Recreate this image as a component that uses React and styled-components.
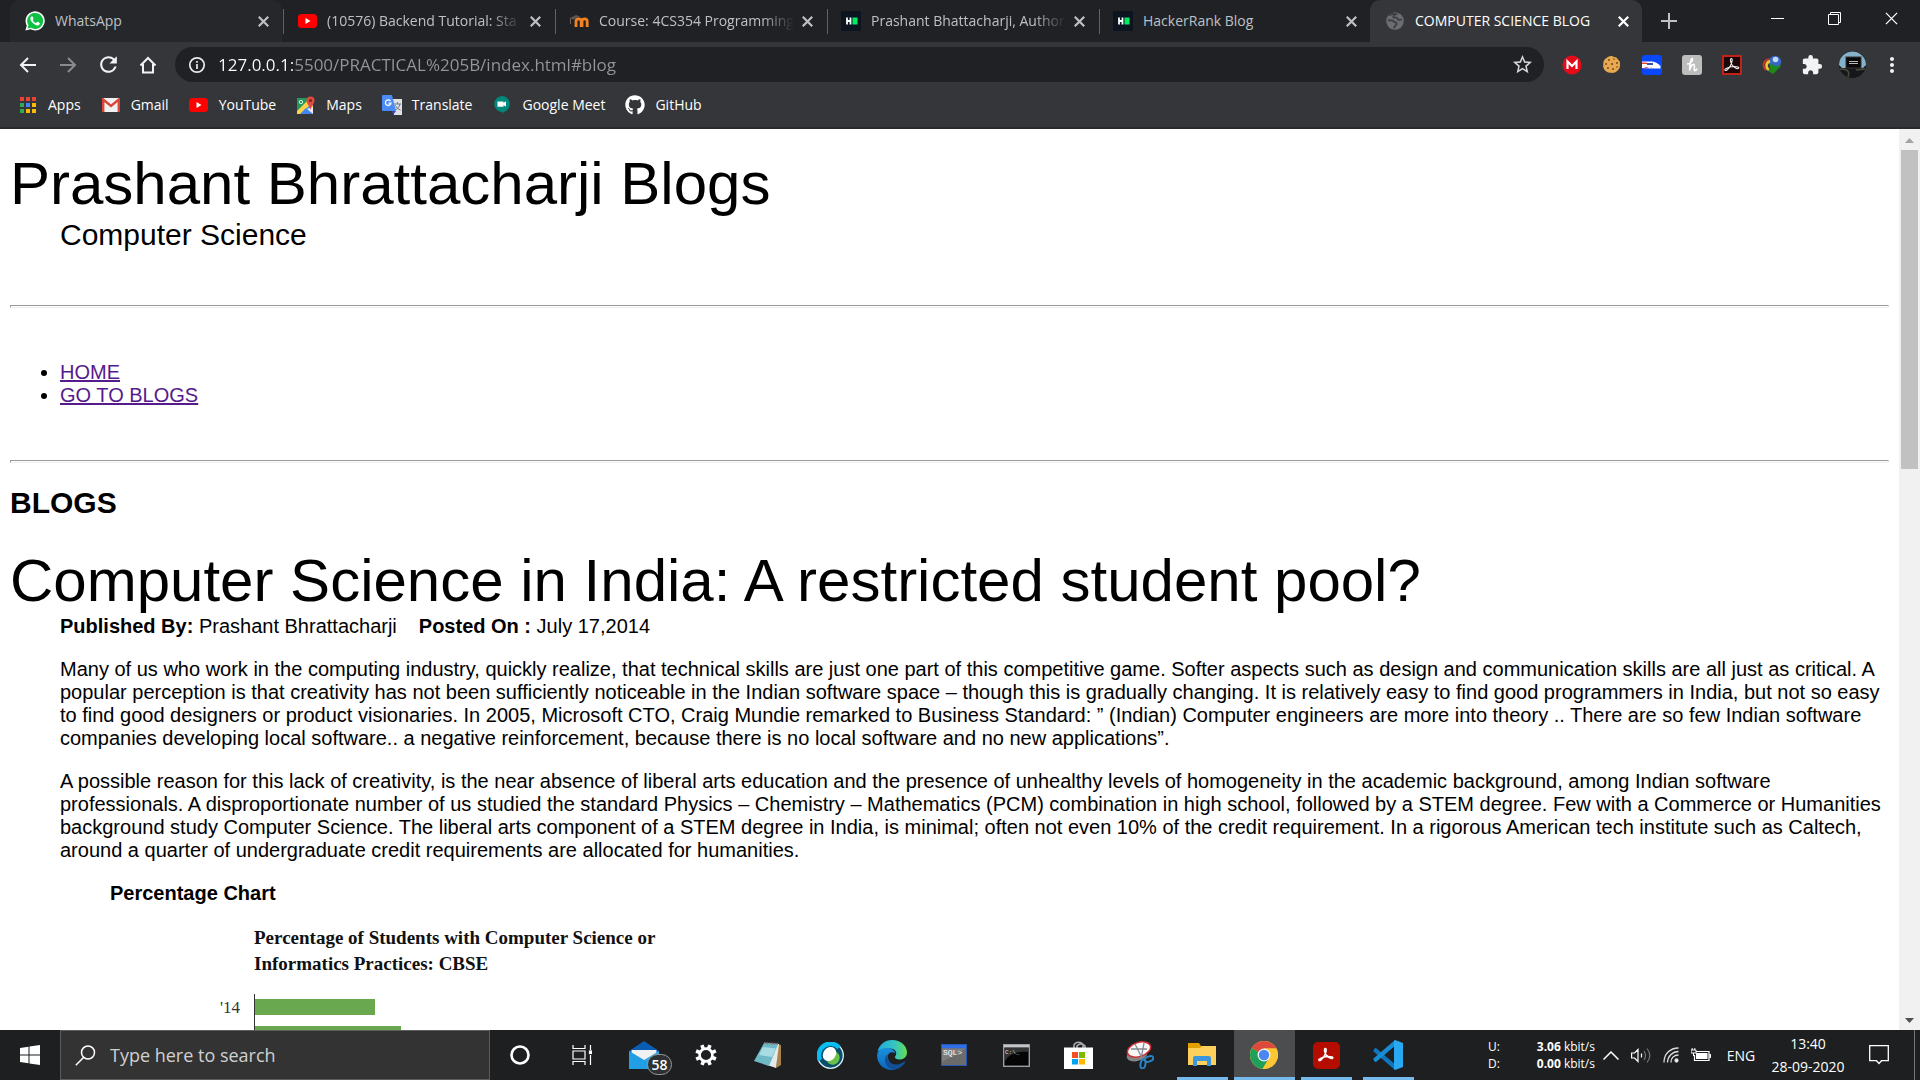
import React from "react";
import styled, { createGlobalStyle, css } from "styled-components";
import { FaGithub } from "react-icons/fa";
import { MdExtension, MdStarBorder, MdMoreVert, MdRefresh } from "react-icons/md";

const UI_FONT = `"Open Sans", "Noto Sans", sans-serif`;
const PAGE_FONT = `"Liberation Sans", Arial, sans-serif`;
const CHART_FONT = `"Liberation Serif", "Times New Roman", serif`;

const GlobalStyle = createGlobalStyle`
  *, *::before, *::after { box-sizing: border-box; }
  html, body { margin: 0; padding: 0; }
  body { background: #fff; font-family: ${UI_FONT}; overflow: hidden; }
  button { font: inherit; color: inherit; background: none; border: 0; padding: 0; }
  svg { display: block; flex: none; }
`;

const Screen = styled.div`
  display: flex;
  flex-direction: column;
  height: 100vh;
`;

/* ---------- browser frame ---------- */

const TabStrip = styled.div`
  display: flex;
  height: 42px;
  padding-left: 10px;
  background: #202124;
  color: #bdc1c6;
`;

const Tab = styled.div`
  display: flex;
  align-items: center;
  flex: 0 1 272px;
  min-width: 0;
  height: 42px;
  padding: 0 10px 0 15px;
  gap: 10px;
  font-size: 14px;
  position: relative;
  ${(p) => p.$hover && css`
    background: #26272b;
    border-radius: 10px 10px 0 0;
  `}
  ${(p) => p.$divider && css`
    &::after {
      content: "";
      position: absolute;
      right: -2px;
      top: 9px;
      width: 1px;
      height: 25px;
      background: #5f6368;
    }
  `}
  ${(p) => p.$active && css`
    background: #35363a;
    color: #fff;
    border-radius: 10px 10px 0 0;
  `}
`;

const IconSlot = styled.span`
  display: flex;
  align-items: center;
  justify-content: center;
  flex: none;
  width: 20px;
  height: 20px;
`;

const TabTitle = styled.span`
  flex: 1;
  min-width: 0;
  overflow: hidden;
  white-space: nowrap;
  line-height: 22px;
  ${(p) => p.$fade && css`
    mask-image: linear-gradient(to right, #000 calc(100% - 32px), transparent);
  `}
`;

const TabClose = styled.button`
  display: flex;
  align-items: center;
  justify-content: center;
  width: 18px;
  height: 18px;
  margin-left: -6px;
`;

const NewTab = styled.button`
  display: flex;
  align-items: center;
  justify-content: center;
  width: 54px;
`;

const WindowControls = styled.div`
  display: flex;
  margin-left: auto;
  height: 36px;
`;

const WindowButton = styled.button`
  display: flex;
  align-items: center;
  justify-content: center;
  width: 57px;
  color: #fff;
`;

const Toolbar = styled.div`
  display: flex;
  align-items: center;
  height: 45px;
  padding: 0 8px;
  background: #35363a;
  color: #f1f3f4;
`;

const ToolButton = styled.button`
  display: flex;
  align-items: center;
  justify-content: center;
  width: 40px;
  height: 36px;
  opacity: ${(p) => (p.$dim ? 0.45 : 1)};
`;

const Omnibox = styled.form`
  display: flex;
  align-items: center;
  flex: 1;
  height: 35px;
  margin: 0 8px 0 7px;
  padding: 0 10px 0 13px;
  gap: 12px;
  border-radius: 18px;
  background: #202124;
`;

const Address = styled.input`
  flex: 1;
  min-width: 0;
  height: 28px;
  padding: 0;
  border: 0;
  outline: 0;
  font: 17px/28px ${UI_FONT};
  color: #9a9a9a;
  background: linear-gradient(to right, #fff 75px, #949699 75px);
  background-clip: text;
  -webkit-text-fill-color: transparent;
`;

const Bookmarks = styled.nav`
  display: flex;
  align-items: center;
  height: 42px;
  padding: 0 0 4px 18px;
  gap: 20px;
  background: #35363a;
  border-bottom: 2px solid #28292c;
`;

const Bookmark = styled.a`
  display: flex;
  align-items: center;
  gap: 10px;
  color: #fff;
  font-size: 14px;
  line-height: 20px;
  text-decoration: none;
`;

/* ---------- web page ---------- */

const Viewport = styled.div`
  display: flex;
  flex: 1;
  min-height: 0;
  background: #fff;
`;

const Page = styled.main`
  flex: 1;
  min-width: 0;
  overflow: hidden;
  padding: 21px 10px 0;
  color: #000;
  font: 20px/23px ${PAGE_FONT};
`;

const Headline = styled.h1`
  margin: 0;
  font-size: 60px;
  font-weight: 400;
  line-height: 68px;
`;

const Indent = styled.div`
  padding-left: 50px;
`;

const Tagline = styled.div`
  font-size: 30px;
  line-height: 34px;
`;

const Rule = styled.hr`
  height: 3px;
  margin: 53px 0;
  border: 1px solid #9a9a9a;
  border-color: #9a9a9a #eee #eee #9a9a9a;
`;

const LinkList = styled.ul`
  margin: 0;
  padding-left: 50px;
`;

const VisitedLink = styled.a`
  color: #551a8b;
  text-decoration-thickness: 2px;
`;

const SectionTitle = styled.h2`
  margin: -30px 0 27px;
  font-size: 30px;
  line-height: 34px;
`;

const Byline = styled.div`
  display: flex;
  gap: 22px;
`;

const Paragraph = styled.p`
  margin: 20px 0 0;
`;

const ChartBlock = styled.section`
  padding-left: 50px;
`;

const ChartHeading = styled.h3`
  margin: 20px 0;
  font-size: 20px;
  line-height: 23px;
`;

const Figure = styled.figure`
  margin: 0;
  padding-left: 110px;
`;

const ChartTitle = styled.figcaption`
  width: 440px;
  margin: 0 0 17px 34px;
  font: bold 19px/26px ${CHART_FONT};
  color: #111;
`;

const ChartRow = styled.div`
  display: flex;
  align-items: center;
  height: 27px;
`;

const ChartLabel = styled.span`
  width: 34px;
  padding-right: 15px;
  text-align: right;
  font: 17px/20px ${CHART_FONT};
  color: #333;
`;

const ChartTrack = styled.div`
  display: flex;
  align-items: center;
  height: 27px;
  border-left: 1px solid #333;
`;

const ChartBar = styled.div`
  height: 16px;
  background: #6aa84f;
  margin-bottom: 2px;
`;

const ScrollTrack = styled.div`
  display: flex;
  flex-direction: column;
  align-items: center;
  width: 21px;
  padding: 9px 2px 7px;
  background: #f1f1f1;
`;

const ScrollThumb = styled.div`
  width: 17px;
  height: 36%;
  margin: 7px 0 auto;
  background: #c1c1c1;
`;

/* ---------- taskbar ---------- */

const Taskbar = styled.footer`
  display: flex;
  height: 50px;
  background: #1d1f20;
  color: #fff;
`;

const StartButton = styled.button`
  display: flex;
  align-items: center;
  justify-content: center;
  width: 60px;
`;

const SearchBox = styled.label`
  display: flex;
  align-items: center;
  width: 430px;
  padding: 0 14px;
  gap: 14px;
  background: #333;
  border: 1px solid #5c5c5c;
`;

const SearchInput = styled.input`
  flex: 1;
  min-width: 0;
  padding: 0;
  border: 0;
  outline: 0;
  background: none;
  color: #fff;
  font: 18px/26px ${UI_FONT};
  &::placeholder { color: #d0d0d0; opacity: 1; }
`;

const AppList = styled.div`
  display: flex;
  gap: 1px;
`;

const AppButton = styled.button`
  display: flex;
  align-items: center;
  justify-content: center;
  width: 61px;
  padding-right: 1px;
  position: relative;
  background: ${(p) => (p.$focused ? "#4b4d4e" : "transparent")};
  ${(p) => p.$open && css`
    &::after {
      content: "";
      position: absolute;
      bottom: 0;
      left: ${p.$focused ? 0 : 5}px;
      right: ${p.$focused ? 0 : 5}px;
      height: 3px;
      background: #76b9ed;
    }
  `}
`;

const Badge = styled.span`
  position: absolute;
  right: 3px;
  bottom: 5px;
  width: 25px;
  height: 21px;
  border: 1px solid #999;
  border-radius: 11px;
  background: #2d3133;
  font-size: 14px;
  font-weight: 600;
  line-height: 19px;
  text-align: center;
`;

const Tray = styled.div`
  display: flex;
  align-items: center;
  margin-left: auto;
  height: 50px;
`;

const NetMeter = styled.div`
  display: grid;
  grid-template-columns: 47px 60px;
  line-height: 17px;
  font-size: 12px;
  margin-right: 1px;
`;

const NetValue = styled.span`
  text-align: right;
  white-space: nowrap;
`;

const TrayButton = styled.button`
  display: flex;
  align-items: center;
  justify-content: center;
  width: 30px;
  height: 50px;
`;

const Language = styled.button`
  width: 50px;
  font-size: 14px;
`;

const Clock = styled.time`
  width: 84px;
  text-align: center;
  font-size: 14px;
  line-height: 23px;
`;

const Notifications = styled.button`
  display: flex;
  justify-content: center;
  width: 64px;
  padding-right: 6px;
`;

const ShowDesktop = styled.button`
  width: 6px;
  height: 50px;
  border-left: 1px solid #777;
`;

/* ---------- icons ---------- */

const Svg = ({ w = 20, h = w, box, children, ...rest }) => (
  <svg width={w} height={h} viewBox={box || `0 0 ${w} ${h}`} fill="none" aria-hidden="true" {...rest}>
    {children}
  </svg>
);

const Cross = ({ size = 10, width = 2 }) => (
  <Svg w={size} box="0 0 10 10" stroke="currentColor" strokeWidth={width}>
    <path d="M.7.7 9.3 9.3M9.3.7.7 9.3" />
  </Svg>
);

const WhatsAppIcon = () => (
  <Svg w={20} box="0 0 20 20">
    <path d="M.4 19.6 1.8 14.6A9.6 9.6 0 1 1 5.6 18.3Z" fill="#fff" />
    <path d="M2.5 17.6 3.4 14.2A8 8 0 1 1 6.1 16.8Z" fill="#0dc143" />
    <path d="M7 5.2c-.6 0-1.7.9-1.7 2.4 0 2.6 4 6.7 7 6.9 1.300 0 2.500-.9 2.500-2.300 0-.4-2-1.500-2.400-1.400-.4 0-1 1.200-1.400 1.200-1 0-3.300-2.300-3.300-3 0-.3.800-.9.800-1.300C8.500 7.200 7.700 5.200 7 5.200Z" fill="#fff" />
  </Svg>
);

const YouTubeIcon = () => (
  <Svg w={19} h={14}>
    <rect width="19" height="14" rx="3.500" fill="#f00" />
    <path d="M7.500 4 12.500 7l-5 3Z" fill="#fff" />
  </Svg>
);

const MoodleIcon = () => (
  <Svg w={20} h={20}>
    <path d="M7 16V10.500a2.600 2.600 0 0 1 5.200 0V16M13 16V10.500a2.600 2.600 0 0 1 5.200 0V16" stroke="#f58220" strokeWidth="2.800" />
    <path d="M0 7.500 7 4l4 1.500L5 8.500Z" fill="#5b5550" />
    <path d="M1.500 7.500V13" stroke="#6b625b" strokeWidth="1" />
  </Svg>
);

const HackerRankIcon = () => (
  <Svg w={20}>
    <rect width="20" height="20" fill="#0b141f" />
    <path d="M6 6.500v7M9.500 6.500v7M6 10h3.500" stroke="#fff" strokeWidth="1.800" />
    <rect x="11.500" y="6.500" width="5" height="7" fill="#00ea64" />
  </Svg>
);

const GlobeIcon = () => (
  <Svg w={18}>
    <circle cx="9" cy="9" r="8.800" fill="#6a6d72" />
    <path d="M3 3.500C5 2 8 1.500 10 2.200 8 3 7 4 7.500 5.500c2.500-.5 4 .5 4.500 2 1.500.3 3 .5 4 0M2 8.500c2.500-.5 5 0 6.500 1.500 2 .3 2.500 1.500 1.500 3-1.300.7-1.500 1.800-2 3.200" stroke="#3d3f43" strokeWidth="1.900" />
  </Svg>
);

const ArrowIcon = ({ flip }) => (
  <Svg w={18} box="0 0 18 18" stroke="currentColor" strokeWidth="2">
    {flip ? <path d="M1 9h15M9 2l7 7-7 7" /> : <path d="M17 9H2M9 2 2 9l7 7" />}
  </Svg>
);

const HomeIcon = () => (
  <Svg w={18} stroke="currentColor" strokeWidth="2">
    <path d="M1.500 9.500 9 2l7.500 7.500M4 8v8.500h10V8" />
  </Svg>
);

const InfoIcon = () => (
  <Svg w={18} stroke="#e8eaed" strokeWidth="1.700">
    <circle cx="9" cy="9" r="7.200" />
    <path d="M9 8v5M9 5v1.800" />
  </Svg>
);

const MegaIcon = () => (
  <Svg w={20}>
    <circle cx="10" cy="10" r="9.500" fill="#e60b18" />
    <path d="M5.500 14V6.500L10 11l4.500-4.500V14" stroke="#fff" strokeWidth="2.200" />
  </Svg>
);

const CookieIcon = () => (
  <Svg w={20}>
    <path d="M6 2c3-2 5-.5 6.500 0 3 .5 3 2.500 4.500 3.500 1.500 2 1 3 1 5 0 3-1.500 4-3 5.500-2 2-4 2-6 1.800C5 18 3.500 16 2 14c-1.200-2-.8-3.500-.7-5.500C1.300 5 3.500 3.500 6 2Z" fill="#e8a850" />
    <g fill="#6b421c">
      <circle cx="7" cy="5" r=".9" /><circle cx="12" cy="4" r=".8" /><circle cx="4" cy="9" r=".9" />
      <circle cx="10" cy="9" r="1" /><circle cx="15" cy="8" r=".9" /><circle cx="6" cy="13" r=".9" />
      <circle cx="11" cy="14" r=".9" /><circle cx="15" cy="12" r=".8" />
    </g>
  </Svg>
);

const TrainIcon = () => (
  <Svg w={20}>
    <rect width="20" height="20" rx="3" fill="#0a48fb" />
    <path d="M0 6.500h9c4 0 7 2 9.500 4.500v2.500H8L0 13Z" fill="#fff" />
    <path d="M0 7.500h5v1.500H0ZM0 14c4-3 8-2.500 12-.2L7 12.300Z" fill="#e5483c" />
    <path d="M5 8h6v2H5Z" fill="#3e4d9c" />
  </Svg>
);

const HoneyIcon = () => (
  <Svg w={20}>
    <rect width="20" height="20" rx="3" fill="#bdbdbd" />
    <path d="M5 9c3 0 6-3 5.500-5C9.500 2.300 8 7 7.500 15.500c1-4.500 3-6.500 4.500-6 1.500.8-.8 5 .5 6 1.200.4 2-.8 2.500-1.800" stroke="#fff" strokeWidth="1.600" />
  </Svg>
);

const ACROBAT = "M5 15c-2 1.300-3-.2-1.300-1.200C6 12.300 9 11.500 12 11.500c4 0 5.500.8 4.500 1.800-1.200 1-4.500-.8-6.300-3.300C8.300 7 8 3.500 9.300 3.500c1.600 0 .8 3.700-.5 6.500-1 2.200-2.300 4-3.800 5Z";

const AcrobatExtIcon = () => (
  <Svg w={20}>
    <rect x="1" y="1" width="18" height="18" fill="#1c0708" stroke="#c02418" strokeWidth="2" />
    <path d={ACROBAT} stroke="#eee" strokeWidth="1.100" />
  </Svg>
);

const IdmIcon = () => (
  <Svg w={20}>
    <circle cx="13" cy="7" r="6.200" fill="#3567c4" />
    <circle cx="13.500" cy="4.500" r="2.800" fill="#c4d9f6" />
    <path d="M7 4C1 6 0 11 4 15" stroke="#c6352c" strokeWidth="2" />
    <path d="M8 6c-5 2-4 7-1 9" stroke="#eac832" strokeWidth="2.500" />
    <path d="M9 9c-2 2-2 4 0 5l-3 2 5 3 8-8-3-1-2 2-4-3Z" fill="#1f8a1c" />
  </Svg>
);

const Avatar = () => (
  <Svg w={27}>
    <circle cx="13.500" cy="13.500" r="13.500" fill="#15181a" />
    <path d="M0 14A13.500 13.500 0 0 1 27 14l-3 3H3Z" fill="#84b2ca" />
    <rect x="7" y="6" width="15" height="11" fill="#080808" stroke="#333" />
    <path d="M10 10.500h9M10 12.500h9" stroke="#bbb" strokeWidth="1" />
    <path d="M1 18c8 0 10 3 8 8M26 18l-9 1" stroke="#4d493b" strokeWidth="1.500" />
  </Svg>
);

const AppsIcon = () => {
  const colors = ["#ea4335", "#ea4335", "#ea4335", "#34a853", "#4285f4", "#fbbc05", "#34a853", "#fbbc05", "#fbbc05"];
  return (
    <Svg w={18}>
      {colors.map((c, i) => (
        <rect key={i} x={1 + (i % 3) * 6} y={1 + Math.floor(i / 3) * 6} width="4" height="4" fill={c} />
      ))}
    </Svg>
  );
};

const GmailIcon = () => (
  <Svg w={18} h={14}>
    <rect width="18" height="14" rx="1" fill="#f2f2f2" />
    <path d="M1.200 14V1.500L9 8l7.800-6.500V14" stroke="#dc4639" strokeWidth="2.400" />
  </Svg>
);

const MapsIcon = () => (
  <Svg w={18}>
    <rect y="2" width="16" height="16" rx="1" fill="#4285f4" />
    <path d="M0 2h10l3 4L0 17Z" fill="#23995a" />
    <path d="m0 15 10-10 6 5v3l-4-3-8 8H0Z" fill="#fbd24a" />
    <path d="m3 18 6-6 6 6Z" fill="#4285f4" />
    <path d="M10 13 16 18V11Z" fill="#eee" />
    <path d="M13.500 14C12.500 9 9.500 8 9.500 4.500a4 4 0 0 1 8 0c0 3.500-3 4.500-4 9.500Z" fill="#df4b3f" />
    <circle cx="13.500" cy="4.500" r="1.500" fill="#7c1f18" />
    <circle cx="4" cy="6" r="1.700" stroke="#d8efe0" />
  </Svg>
);

const TranslateIcon = () => (
  <Svg w={20}>
    <path d="M8 4h12v16h-8Z" fill="#dfe1e5" />
    <path d="M12 9h7M15.500 7v2M18 9c-.5 3-2.500 5-5 6M13.500 10.500c1 2.300 2.500 3.500 5 4.500" stroke="#6b7b8b" />
    <path d="M10 16h4l-3 4Z" fill="#3747b5" />
    <path d="M1 0h9l4 16H1a1 1 0 0 1-1-1V1a1 1 0 0 1 1-1Z" fill="#4b8bf5" />
    <path d="M8.500 6A2.800 2.800 0 1 0 9 8.200H6.500" stroke="#fff" strokeWidth="1.300" />
  </Svg>
);

const MeetIcon = () => (
  <Svg w={16} h={18}>
    <path d="M8 0a8 8 0 0 1 2 15.700L8.500 18v-2A8 8 0 0 1 8 0Z" fill="#00897b" />
    <path d="M3.500 5.500h6v1.600L12 5.300v5.400L9.500 9v1.700h-6Z" fill="#fff" />
  </Svg>
);

const WindowsIcon = () => (
  <Svg w={20}>
    <path d="m0 3 8.500-1.200v7.700H0ZM9.500 1.600 20 0v9.500H9.500ZM0 10.500h8.500v7.700L0 17ZM9.500 10.500H20V20L9.500 18.400Z" fill="#fff" />
  </Svg>
);

const SearchIcon = () => (
  <Svg w={21} stroke="#fff" strokeWidth="1.500">
    <circle cx="13" cy="7.500" r="6.500" /><path d="M8.500 12.500.8 20.200" />
  </Svg>
);

const CortanaIcon = () => (
  <Svg w={20}><circle cx="10" cy="10" r="8.500" stroke="#fff" strokeWidth="2.600" /></Svg>
);

const TaskViewIcon = () => (
  <Svg w={20} stroke="#fff" strokeWidth="1.200">
    <path d="M1 0v3.500h12V0M1 6h12v8H1ZM1 20v-3.500h12V20M18.500 0v5M18.500 10v10" />
    <rect x="17.500" y="6" width="2" height="2.500" fill="#fff" />
  </Svg>
);

const MailIcon = () => (
  <Svg w={30} h={28}>
    <path d="M0 10 15 0l15 10v4H0Z" fill="#0a5cb4" />
    <path d="M2.500 9h25v10h-25Z" fill="#f1f1f1" />
    <path d="m0 10 15 9 15-9v18H0Z" fill="#2ba8ea" />
    <path d="M0 10v18h30Z" fill="#1794dd" opacity=".5" />
  </Svg>
);

const GearIcon = () => (
  <Svg w={22} stroke="#fff">
    <circle cx="11" cy="11" r="6.400" strokeWidth="2.600" />
    {[22, 67, 112, 157, 202, 247, 292, 337].map((a) => (
      <path key={a} d="M11 .3v4" strokeWidth="3.600" transform={`rotate(${a} 11 11)`} />
    ))}
  </Svg>
);

const NotepadIcon = () => (
  <Svg w={28}>
    <path d="m24 3 3 1v20l-5 3Z" fill="#a9824a" />
    <path d="M10 2 25 3l-3 24-9-3Z" fill="#e4e9ea" />
    <path d="M10 2 24 3.500 15 25 0 20Z" fill="#6fb8c6" />
    <path d="M9 6 22 7.500 18 16 5 14Z" fill="#a9dbe2" />
    <path d="M10 2 25 3" stroke="#777" strokeWidth="2" strokeDasharray="1.500 1" />
  </Svg>
);

const WebexIcon = () => (
  <Svg w={27}>
    <circle cx="13.500" cy="13.500" r="12.800" fill="#0b4f6c" stroke="#d9f3fb" strokeWidth="1.300" />
    <path d="M3 18A11.500 11.500 0 0 1 22 5.500" stroke="#05bdf0" strokeWidth="4.500" />
    <ellipse cx="16" cy="16" rx="6.500" ry="7" fill="#6cc04a" transform="rotate(40 16 16)" />
    <ellipse cx="12.500" cy="12" rx="6.200" ry="7.500" fill="#fff" transform="rotate(40 12.500 12)" />
  </Svg>
);

const EdgeIcon = () => (
  <Svg w={30}>
    <defs>
      <linearGradient id="edgeTop" x1="0" x2="1"><stop stopColor="#23a8e0" /><stop offset=".6" stopColor="#35c6c0" /><stop offset="1" stopColor="#66dd4a" /></linearGradient>
      <linearGradient id="edgeSide" x1="0" x2="0" y1="0" y2="1"><stop stopColor="#1b90de" /><stop offset="1" stopColor="#0b66bb" /></linearGradient>
    </defs>
    <path d="M.5 12C2 4.500 8 0 15 0c9 0 15 6 15 12.500 0 4-3 7-7 7-3.500 0-5.500-1.300-5-2.700 3-4 .5-8.300-5-8.300C8 8.500 3 9 .5 12Z" fill="url(#edgeTop)" />
    <path d="M.2 14C1.500 10 5 8 9.500 8c4.500 0 8 2 8.800 5-5-2.500-8.500 1-7.300 5.500C12.500 24 18 27 23 26c-3 3.500-6 4-9 4C5 29.500-.8 22 .2 14Z" fill="url(#edgeSide)" />
    <path d="M11 14c-2 5 1.500 10.500 8 10.500 3.500 0 6.500-1.500 8.500-3 1 0 .8.800.3 1.500C24 29 17 31 12.500 28 6.500 24 7 16.500 11 14Z" fill="#124f97" />
  </Svg>
);

const SqlIcon = () => (
  <Svg w={26} h={22}>
    <rect x=".5" y=".5" width="25" height="21" fill="#6b6b6b" stroke="#2a56b4" />
    <path d="M1 1h24v3.500H1Z" fill="#2e6fe8" />
    <path d="M1 4.500h24L1 18Z" fill="#7d7d7d" />
    <text x="2" y="11" fill="#fff" fontSize="8" fontFamily="Liberation Mono, monospace">SQL&gt;</text>
  </Svg>
);

const CmdIcon = () => (
  <Svg w={27} h={23}>
    <rect x=".7" y=".7" width="25.600" height="21.600" fill="#050505" stroke="#9b9fa3" strokeWidth="1.400" />
    <path d="M1 1h25v2.500H1Z" fill="#c3c7ca" />
    <path d="M2 4h23v4C14 7 6 10 2 17Z" fill="#333" />
    <text x="2" y="10" fill="#ddd" fontSize="6" fontFamily="Liberation Mono, monospace">C:\_</text>
  </Svg>
);

const StoreIcon = () => (
  <Svg w={29} h={30}>
    <path d="M10 9V5a5 5 0 0 1 9 0v4M13 9V6a5 5 0 0 1 8 0v3" stroke="#aaa" strokeWidth="1.600" />
    <path d="M0 7.500h29V29H0Z" fill="#fff" />
    <path d="M8 12h6v6H8Z" fill="#f25022" /><path d="M15 12h6v6h-6Z" fill="#7fba00" />
    <path d="M8 19h6v5.500H8Z" fill="#00a4ef" /><path d="M15 19h6v5.500h-6Z" fill="#ffb900" />
  </Svg>
);

const SnipIcon = () => (
  <Svg w={28}>
    <ellipse cx="11" cy="14" rx="10.500" ry="6" fill="#858585" transform="rotate(-15 11 14)" />
    <ellipse cx="13" cy="8.500" rx="12" ry="7" fill="#f7f7f7" stroke="#d12e33" strokeWidth="1.500" transform="rotate(-18 13 8.500)" />
    <path d="M9 3l7 14M18 2l-3 16M5 8l16 0" stroke="#858b90" strokeWidth="1.300" />
    <ellipse cx="23" cy="18" rx="4.500" ry="2.500" stroke="#2b83c6" strokeWidth="2" transform="rotate(-20 23 18)" />
    <ellipse cx="17" cy="23" rx="2.500" ry="4.500" stroke="#2b83c6" strokeWidth="2" transform="rotate(10 17 23)" />
  </Svg>
);

const ExplorerIcon = () => (
  <Svg w={28} h={24}>
    <path d="M0 0h11l2 3H28v4H0Z" fill="#e2a000" />
    <path d="M0 5h12l2-2h13a1 1 0 0 1 1 1v18H0Z" fill="#fdd05b" />
    <path d="M5 23V15a2 2 0 0 1 2-2h14a2 2 0 0 1 2 2v8h-4v-5H9v5Z" fill="#3c96dc" />
  </Svg>
);

const ChromeIcon = () => (
  <Svg w={28}>
    <circle cx="14" cy="14" r="14" fill="#fbc834" />
    <path d="M14 14 1.900 7A14 14 0 0 0 12.500 27.900L19 17Z" fill="#1da05a" />
    <path d="M14 14 1.900 7A14 14 0 0 1 26.300 7.500H14Z" fill="#dc4a3d" />
    <path d="M14 7.500h12.300A14 14 0 0 1 12.500 27.900l7-11Z" fill="#fbc834" />
    <circle cx="14" cy="14" r="6.500" fill="#f4f4f4" />
    <circle cx="14" cy="14" r="5.200" fill="#4a87ee" />
  </Svg>
);

const AcrobatIcon = () => (
  <Svg w={27} box="0 0 27 27">
    <rect width="27" height="27" rx="5" fill="#b50c00" />
    <path d={ACROBAT} transform="translate(3 3)" stroke="#fff" strokeWidth="1.500" />
  </Svg>
);

const CodeIcon = () => (
  <Svg w={30}>
    <path d="m3 8 20 17-1 5L.5 11.500C0 10 1.500 8 3 8Z" fill="#0f75bd" />
    <path d="M3 22 23 5l-1-5L.5 18.500C0 20 1.500 22 3 22Z" fill="#168cd5" />
    <path d="M22 0 30 3v24l-8 3-1-1V1Z" fill="#29a9f2" />
  </Svg>
);

const NewTabIcon = () => (
  <Svg w={16} stroke="currentColor" strokeWidth="2"><path d="M8 0v16M0 8h16" /></Svg>
);

/* ---------- data ---------- */

const tabs = [
  { title: "WhatsApp", icon: <WhatsAppIcon />, hover: true, divider: true },
  { title: "(10576) Backend Tutorial: Sta", icon: <YouTubeIcon />, fade: true, divider: true },
  { title: "Course: 4CS354 Programming", icon: <MoodleIcon />, fade: true, divider: true },
  { title: "Prashant Bhattacharji, Author", icon: <HackerRankIcon />, fade: true, divider: true },
  { title: "HackerRank Blog", icon: <HackerRankIcon /> },
  { title: "COMPUTER SCIENCE BLOG", icon: <GlobeIcon />, active: true },
];

const bookmarks = [
  ["Apps", <AppsIcon />],
  ["Gmail", <GmailIcon />],
  ["YouTube", <YouTubeIcon />],
  ["Maps", <MapsIcon />],
  ["Translate", <TranslateIcon />],
  ["Google Meet", <MeetIcon />],
  ["GitHub", <FaGithub size={20} />],
];

const extensions = [
  ["MEGA", <MegaIcon />],
  ["Cookies", <CookieIcon />],
  ["Train", <TrainIcon />],
  ["Honey", <HoneyIcon />],
  ["Adobe Acrobat", <AcrobatExtIcon />],
  ["Download manager", <IdmIcon />],
  ["Extensions", <MdExtension size={22} />],
  ["Profile", <Avatar />],
];

const apps = [
  { name: "Cortana", icon: <CortanaIcon /> },
  { name: "Task View", icon: <TaskViewIcon /> },
  { name: "Mail", icon: <MailIcon />, badge: "58" },
  { name: "Settings", icon: <GearIcon /> },
  { name: "Notepad", icon: <NotepadIcon /> },
  { name: "Webex", icon: <WebexIcon /> },
  { name: "Edge", icon: <EdgeIcon /> },
  { name: "SQL", icon: <SqlIcon /> },
  { name: "Command Prompt", icon: <CmdIcon /> },
  { name: "Store", icon: <StoreIcon /> },
  { name: "Snipping Tool", icon: <SnipIcon /> },
  { name: "File Explorer", icon: <ExplorerIcon />, open: true },
  { name: "Chrome", icon: <ChromeIcon />, open: true, focused: true },
  { name: "Acrobat Reader", icon: <AcrobatIcon />, open: true },
  { name: "VS Code", icon: <CodeIcon />, open: true },
];

const chart = [
  { year: "'14", width: 120 },
  { year: "", width: 146 },
];

export default function App() {
  return (
    <Screen>
      <GlobalStyle />
      <TabStrip>
        {tabs.map((t) => (
          <Tab key={t.title} $active={t.active} $hover={t.hover} $divider={t.divider}>
            <IconSlot>{t.icon}</IconSlot>
            <TabTitle $fade={t.fade}>{t.title}</TabTitle>
            <TabClose aria-label="Close tab"><Cross size={11} /></TabClose>
          </Tab>
        ))}
        <NewTab aria-label="New tab"><NewTabIcon /></NewTab>
        <WindowControls>
          <WindowButton aria-label="Minimize">
            <Svg w={13} h={1}><path d="M0 .5h13" stroke="#fff" /></Svg>
          </WindowButton>
          <WindowButton aria-label="Restore">
            <Svg w={13} stroke="#fff"><path d="M.5 2.500h10v10H.5ZM2.500 2.500v-2h10v10h-2" /></Svg>
          </WindowButton>
          <WindowButton aria-label="Close"><Cross size={13} width={1} /></WindowButton>
        </WindowControls>
      </TabStrip>

      <Toolbar>
        <ToolButton aria-label="Back"><ArrowIcon /></ToolButton>
        <ToolButton aria-label="Forward" $dim><ArrowIcon flip /></ToolButton>
        <ToolButton aria-label="Reload"><MdRefresh size={25} /></ToolButton>
        <ToolButton aria-label="Home"><HomeIcon /></ToolButton>
        <Omnibox onSubmit={(e) => e.preventDefault()}>
          <InfoIcon />
          <Address aria-label="Address" defaultValue="127.0.0.1:5500/PRACTICAL%205B/index.html#blog" />
          <MdStarBorder size={23} color="#d5d7da" />
        </Omnibox>
        {extensions.map(([name, icon]) => (
          <ToolButton key={name} aria-label={name}>{icon}</ToolButton>
        ))}
        <ToolButton aria-label="Menu"><MdMoreVert size={24} /></ToolButton>
      </Toolbar>

      <Bookmarks>
        {bookmarks.map(([name, icon]) => (
          <Bookmark key={name} href="#"><IconSlot>{icon}</IconSlot>{name}</Bookmark>
        ))}
      </Bookmarks>

      <Viewport>
        <Page>
          <Headline>Prashant Bhrattacharji Blogs</Headline>
          <Indent><Tagline>Computer Science</Tagline></Indent>
          <Rule />
          <LinkList>
            <li><VisitedLink href="#home">HOME</VisitedLink></li>
            <li><VisitedLink href="#blog">GO TO BLOGS</VisitedLink></li>
          </LinkList>
          <Rule />
          <SectionTitle>BLOGS</SectionTitle>
          <Headline>Computer Science in India: A restricted student pool?</Headline>
          <Indent>
            <Byline>
              <span><b>Published By:</b> Prashant Bhrattacharji</span>
              <span><b>Posted On :</b> July 17,2014</span>
            </Byline>
            <Paragraph>
              Many of us who work in the computing industry, quickly realize, that technical skills are just one part of
              this competitive game. Softer aspects such as design and communication skills are all just as critical. A
              popular perception is that creativity has not been sufficiently noticeable in the Indian software space –
              though this is gradually changing. It is relatively easy to find good programmers in India, but not so easy
              to find good designers or product visionaries. In 2005, Microsoft CTO, Craig Mundie remarked to Business
              Standard: ” (Indian) Computer engineers are more into theory .. There are so few Indian software companies
              developing local software.. a negative reinforcement, because there is no local software and no new
              applications”.
            </Paragraph>
            <Paragraph>
              A possible reason for this lack of creativity, is the near absence of liberal arts education and the
              presence of unhealthy levels of homogeneity in the academic background, among Indian software
              professionals. A disproportionate number of us studied the standard Physics – Chemistry – Mathematics (PCM)
              combination in high school, followed by a STEM degree. Few with a Commerce or Humanities background study
              Computer Science. The liberal arts component of a STEM degree in India, is minimal; often not even 10% of
              the credit requirement. In a rigorous American tech institute such as Caltech, around a quarter of
              undergraduate credit requirements are allocated for humanities.
            </Paragraph>
            <ChartBlock>
              <ChartHeading>Percentage Chart</ChartHeading>
              <Figure>
                <ChartTitle>Percentage of Students with Computer Science or Informatics Practices: CBSE</ChartTitle>
                {chart.map((row) => (
                  <ChartRow key={row.width}>
                    <ChartLabel>{row.year}</ChartLabel>
                    <ChartTrack><ChartBar style={{ width: row.width }} /></ChartTrack>
                  </ChartRow>
                ))}
              </Figure>
            </ChartBlock>
          </Indent>
        </Page>
        <ScrollTrack aria-hidden="true">
          <Svg w={9} h={5}><path d="M0 5 4.500 0 9 5Z" fill="#a3a3a3" /></Svg>
          <ScrollThumb />
          <Svg w={9} h={5}><path d="M0 0 4.500 5 9 0Z" fill="#505050" /></Svg>
        </ScrollTrack>
      </Viewport>

      <Taskbar>
        <StartButton aria-label="Start"><WindowsIcon /></StartButton>
        <SearchBox>
          <SearchIcon />
          <SearchInput aria-label="Search" placeholder="Type here to search" />
        </SearchBox>
        <AppList>
          {apps.map((a) => (
            <AppButton key={a.name} aria-label={a.name} $open={a.open} $focused={a.focused}>
              {a.icon}
              {a.badge && <Badge>{a.badge}</Badge>}
            </AppButton>
          ))}
        </AppList>
        <Tray>
          <NetMeter>
            <span>U:</span><NetValue><b>3.06</b> kbit/s</NetValue>
            <span>D:</span><NetValue><b>0.00</b> kbit/s</NetValue>
          </NetMeter>
          <TrayButton aria-label="Show hidden icons">
            <Svg w={16} h={9} stroke="#fff" strokeWidth="1.500"><path d="m.5 8.500 7.500-7.500 7.500 7.500" /></Svg>
          </TrayButton>
          <TrayButton aria-label="Volume">
            <Svg w={20} h={17} stroke="#fff" strokeWidth="1.200">
              <path d="M.6 6h3L7 2.500v12L3.600 11h-3ZM10.500 6.500v4" />
              <path d="M13 4c2 3 2 6 0 9M16 1.500c4 5 4 9 0 14" stroke="#777" />
            </Svg>
          </TrayButton>
          <TrayButton aria-label="Network">
            <Svg w={16} h={16} stroke="#ddd" strokeWidth="1.300">
              <path d="M1 15.500C1 7 7 1 15.500 1M4.500 15.500c0-6 5-11 11-11M8 15.500C8 11 11 8 15.500 8" />
              <circle cx="13.500" cy="13.500" r="1.500" fill="#fff" />
            </Svg>
          </TrayButton>
          <TrayButton aria-label="Battery">
            <Svg w={20} h={14}>
              <path d="M5 3.500h13v9H3.500V7" stroke="#fff" strokeWidth="1.200" />
              <rect x="5" y="5" width="11.500" height="6" fill="#fff" />
              <rect x="18.500" y="6" width="1.500" height="4" fill="#fff" />
              <path d="M0 2h5v3H0ZM1.200 0v2M3.800 0v2M2.500 5v3" stroke="#fff" fill="#1d1f20" />
            </Svg>
          </TrayButton>
          <Language>ENG</Language>
          <Clock><div>13:40</div><div>28-09-2020</div></Clock>
          <Notifications aria-label="Notifications">
            <Svg w={20} h={20} stroke="#fff" strokeWidth="1.300"><path d="M.7.7h18.600v15h-6.800L10 18.500l-2.500-2.800H.7Z" /></Svg>
          </Notifications>
          <ShowDesktop aria-label="Show desktop" />
        </Tray>
      </Taskbar>
    </Screen>
  );
}
